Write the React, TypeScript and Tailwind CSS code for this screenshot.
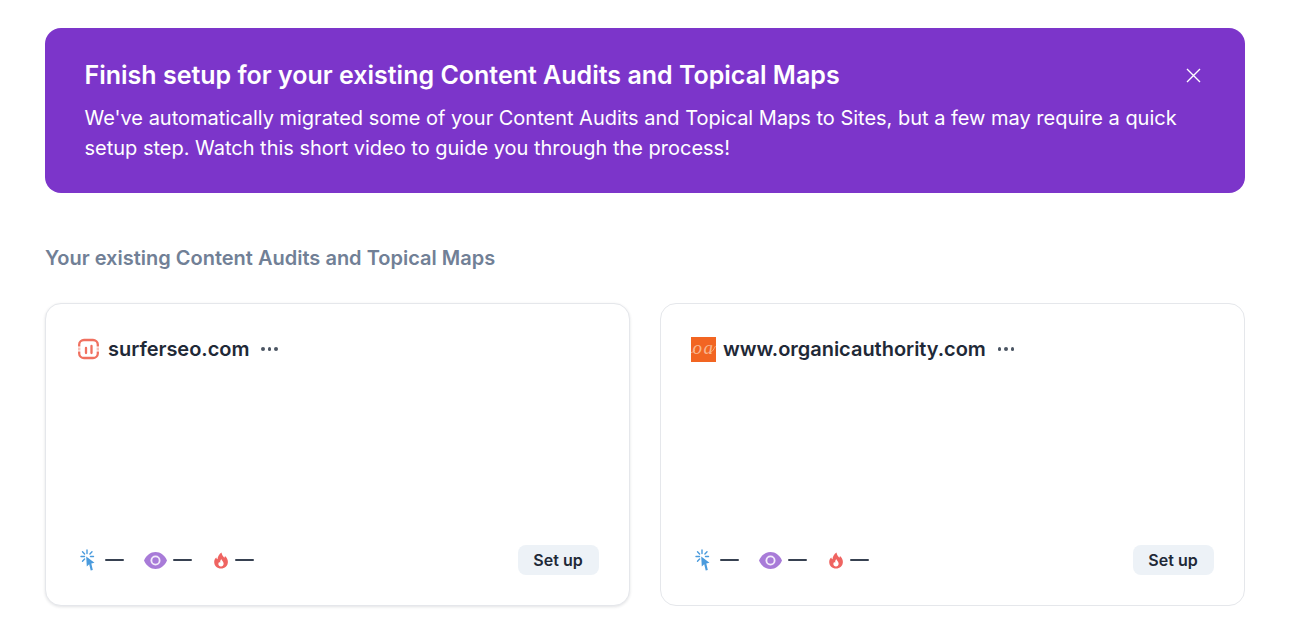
import React from "react";

function SurferIcon() {
  return (
    <svg width="23" height="22" viewBox="0 0 23 22" fill="none" className="shrink-0">
      <path d="M7 2H16C18.500 2 20.800 4 20.800 6.500V8.500M20.800 13.500V15.500C20.800 18 18.500 20 16 20H7C4.500 20 2.200 18 2.200 15.500V13.500M2.200 8.500V6.500C2.200 4 4.500 2 7 2" stroke="#F0705F" strokeWidth="2.300" />
      <path d="M1 9.500H3.400V12.500H1Z M19.600 9.500H22V12.500H19.600Z" fill="#F0705F" opacity="0.45" />
      <path d="M9 10V15M14.500 8V15" stroke="#F0705F" strokeWidth="2.300" strokeLinecap="round" />
    </svg>
  );
}

function OaLogo() {
  return (
    <span className="relative w-[25px] h-[25px] bg-[#f26522] shrink-0 flex items-center justify-center overflow-hidden">
      <span className="font-['Liberation_Serif',serif] italic text-[19px] leading-none tracking-[1.500px] text-[#f8b78f] -mt-[4px]">oa</span>
      <svg width="25" height="25" viewBox="0 0 25 25" fill="none" className="absolute left-0 top-0">
        <path d="M0 15.500C1.500 15.500 2.500 14.500 4 13M19.500 15.500C21.500 14.500 23 12 24.500 9" stroke="#f8b78f" strokeWidth="0.800" />
      </svg>
    </span>
  );
}

function ClickIcon() {
  return (
    <svg width="17" height="22" viewBox="0 0 17 22" fill="none" className="shrink-0">
      <path d="M7 1V4.500M1 7.500H4.500M2.500 2.800L4.600 4.900M12 2.800L9.900 4.900M13.500 7.500H10.500M2.500 12.200L4.600 10.100" stroke="#4A9BDD" strokeWidth="1.400" strokeLinecap="round" />
      <path d="M6.200 7.500L14.500 13.800L11.300 14.400L12.800 21L10.700 21.500L9.200 15.300L6.800 17.500Z" fill="#4A9BDD" />
    </svg>
  );
}

function EyeIcon() {
  return (
    <svg width="23" height="17" viewBox="0 0 23 17" className="shrink-0">
      <path d="M0 8.500C2.500 3 6.500 0 11.500 0C16.500 0 20.500 3 23 8.500C20.500 14 16.500 17 11.500 17C6.500 17 2.500 14 0 8.500Z" fill="#A87BD8" />
      <circle cx="11.500" cy="8.500" r="5" fill="#f3ecfb" />
      <circle cx="11.500" cy="8.500" r="3.200" fill="#A87BD8" />
    </svg>
  );
}

function FlameIcon() {
  return (
    <svg width="16" height="17" viewBox="0 0 16 18" className="shrink-0">
      <path d="M8.500 0.500C9 3.500 10.500 4.500 11.500 6C12 5.500 12.200 5 12.200 4.300C14.200 6 15.300 8.300 15.300 10.500C15.300 14.500 12 17.500 8 17.500C4 17.500 0.800 14.500 0.800 10.500C0.800 8.500 1.800 6.800 3 5.800C3.200 6.800 3.600 7.400 4.300 7.800C4.500 4.800 6 2 8.500 0.500Z" fill="#EF6461" />
      <path d="M8.300 7.500C8.500 9 10.800 10.200 10.800 12.500C10.800 14.200 9.500 15.300 8 15.300C6.500 15.300 5.200 14.200 5.200 12.600C5.200 11.700 5.600 11 6.200 10.500C6.500 11.100 6.800 11.300 7.200 11.400C7 10.200 7.300 8.700 8.300 7.500Z" fill="#fff" />
    </svg>
  );
}

function Dash() {
  return <span className="block w-[19px] h-[2px] bg-[#374151] rounded-full" />;
}

function Stats() {
  return (
    <div className="flex items-center">
      <div className="flex items-center gap-[8px] w-[64px]">
        <ClickIcon />
        <Dash />
      </div>
      <div className="flex items-center gap-[6px] w-[69px]">
        <EyeIcon />
        <Dash />
      </div>
      <div className="flex items-center gap-[6px]">
        <FlameIcon />
        <Dash />
      </div>
    </div>
  );
}

function Card({ logo, name, shadow }: { logo: React.ReactNode; name: string; shadow?: boolean }) {
  return (
    <div
      className={`flex-1 h-[303px] rounded-[16px] border border-[#e5e7eb] bg-white pl-[34px] pr-[30px] pt-[31px] pb-[30px] flex flex-col justify-between ${
        shadow ? "shadow-[0_1px_3px_rgba(15,23,42,0.12)]" : ""
      }`}
    >
      <div className="flex items-center h-[28px]">
        {logo}
        <span className="text-[20px] leading-[28px] font-semibold text-[#1f2937] tracking-[-0.03px]">{name}</span>
        <span className="flex items-center gap-[3px] ml-[12px]">
          <span className="w-[3.500px] h-[3.500px] rounded-full bg-[#4b5563]" />
          <span className="w-[3.500px] h-[3.500px] rounded-full bg-[#4b5563]" />
          <span className="w-[3.500px] h-[3.500px] rounded-full bg-[#4b5563]" />
        </span>
      </div>
      <div className="flex items-center justify-between">
        <Stats />
        <button className="h-[30px] w-[81px] rounded-[8px] bg-[#edf2f7] text-[16px] font-semibold text-[#1f2937] pr-[1px]">Set up</button>
      </div>
    </div>
  );
}

export default function App() {
  return (
    <div className="w-[1290px] h-[641px] overflow-hidden bg-white font-['Inter',sans-serif] pt-[28px] px-[45px]">
      <div className="h-[165px] rounded-[16px] bg-[#7c35ca] text-white pl-[40px] pr-[40px] pt-[32px] relative">
        <div className="text-[25px] leading-[31px] font-semibold -ml-[0.5px]">Finish setup for your existing Content Audits and Topical Maps</div>
        <p className="mt-[12px] text-[20px] leading-[30px] w-[1110px] tracking-[-0.01px] -ml-[0.5px]">
          We've automatically migrated some of your Content Audits and Topical Maps to Sites, but a few may require a quick setup step. Watch this short video to guide you through the process!
        </p>
        <button className="absolute right-[44px] top-[40px]" aria-label="Close">
          <svg width="15" height="15" viewBox="0 0 15 15" fill="none" className="block">
            <path d="M1 1L14 14M14 1L1 14" stroke="#fff" strokeWidth="1.400" />
          </svg>
        </button>
      </div>
      <h2 className="mt-[51px] text-[20px] leading-[28px] font-semibold text-[#718096]">Your existing Content Audits and Topical Maps</h2>
      <div className="mt-[31px] flex gap-[30px]">
        <Card shadow name="surferseo.com" logo={<span className="mr-[8px] -ml-[3px]"><SurferIcon /></span>} />
        <Card name="www.organicauthority.com" logo={<span className="mr-[7px] -ml-[4px]"><OaLogo /></span>} />
      </div>
    </div>
  );
}
